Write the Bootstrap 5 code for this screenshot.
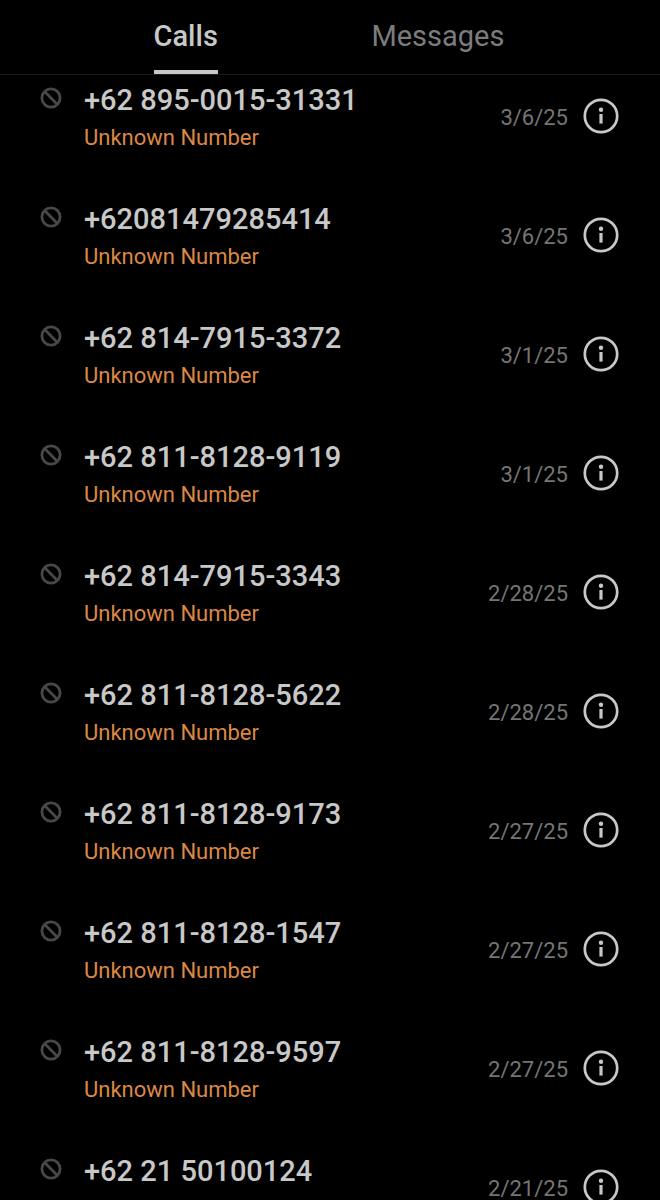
<!DOCTYPE html>
<html lang="en">
<head>
<meta charset="utf-8">
<meta name="viewport" content="width=device-width, initial-scale=1">
<title>Blocked calls</title>
<link rel="stylesheet" href="https://cdn.jsdelivr.net/npm/bootstrap@5.3.0/dist/css/bootstrap.min.css">
<style>
  body { background: #000; color: #c8c8c8; font-family: Roboto, "Liberation Sans", sans-serif; }
  .tab-bar { border-bottom: 1px solid #1c1c1c; padding-right: 2px; }
  .tab-link { color: #7c7c7c; font-size: 29px; line-height: 34px; padding: 19px 0 17px; border-bottom: 4px solid transparent; text-decoration: none; }
  .tab-link.active { color: #c8c8c8; font-weight: 500; border-bottom-color: #c8c8c8; }
  .call-log { overflow-y: auto; scrollbar-width: none; }
  .call-log::-webkit-scrollbar { display: none; }
  .call-row { padding: 8px 41px 42px 40px; }
  .blocked-icon { width: 22px; height: 22px; margin: 4px 22px 0 0; color: #484848; }
  .number { font-size: 29px; line-height: 34px; font-weight: 500; margin-bottom: 7px; }
  .caller { font-size: 22px; line-height: 28px; color: #dc8845; }
  .call-meta { padding-top: 15px; }
  .date { font-size: 22px; line-height: 40px; color: #757575; margin-right: 15px; }
  .info-btn { width: 36px; height: 36px; color: #c8c8c8; }
</style>
</head>
<body>
<svg class="d-none" aria-hidden="true">
  <symbol id="blocked" viewBox="0 0 22 22"><g fill="none" stroke="currentColor" stroke-width="2.8"><circle cx="11" cy="11" r="9.1"/><path d="M4.6 4.6 17.4 17.4"/></g></symbol>
  <symbol id="info" viewBox="0 0 36 36"><circle cx="18" cy="18" r="16.2" fill="none" stroke="currentColor" stroke-width="2.7"/><circle cx="18" cy="11.8" r="2.2" fill="currentColor"/><path d="M16.4 16h3.2v9.6h-3.2z" fill="currentColor"/></symbol>
</svg>
<div class="vh-100 d-flex flex-column overflow-hidden">
  <nav class="tab-bar d-flex justify-content-evenly flex-shrink-0">
    <a class="tab-link active" href="#calls" aria-current="page">Calls</a>
    <a class="tab-link" href="#messages">Messages</a>
  </nav>
  <ul class="call-log list-unstyled mb-0 flex-grow-1" id="calls"></ul>
</div>
<script src="https://cdn.jsdelivr.net/npm/bootstrap@5.3.0/dist/js/bootstrap.bundle.min.js"></script>
<script>
  const unknown = "Unknown Number";
  const calls = [
    ["+62 895-0015-31331", "3/6/25", unknown],
    ["+62081479285414", "3/6/25", unknown],
    ["+62 814-7915-3372", "3/1/25", unknown],
    ["+62 811-8128-9119", "3/1/25", unknown],
    ["+62 814-7915-3343", "2/28/25", unknown],
    ["+62 811-8128-5622", "2/28/25", unknown],
    ["+62 811-8128-9173", "2/27/25", unknown],
    ["+62 811-8128-1547", "2/27/25", unknown],
    ["+62 811-8128-9597", "2/27/25", unknown],
    ["+62 21 50100124", "2/21/25", ""]
  ];
  document.getElementById("calls").innerHTML = calls.map(([number, date, caller]) => `
    <li class="call-row d-flex align-items-start">
      <svg class="blocked-icon flex-shrink-0" role="img" aria-label="Blocked"><use href="#blocked"/></svg>
      <div class="flex-grow-1">
        <div class="number">${number}</div>
        <div class="caller">${caller}</div>
      </div>
      <div class="call-meta d-flex align-items-start">
        <span class="date">${date}</span>
        <button type="button" class="info-btn btn p-0 border-0 d-flex" aria-label="Details for ${number}"><svg class="w-100 h-100"><use href="#info"/></svg></button>
      </div>
    </li>`).join("");
</script>
</body>
</html>
